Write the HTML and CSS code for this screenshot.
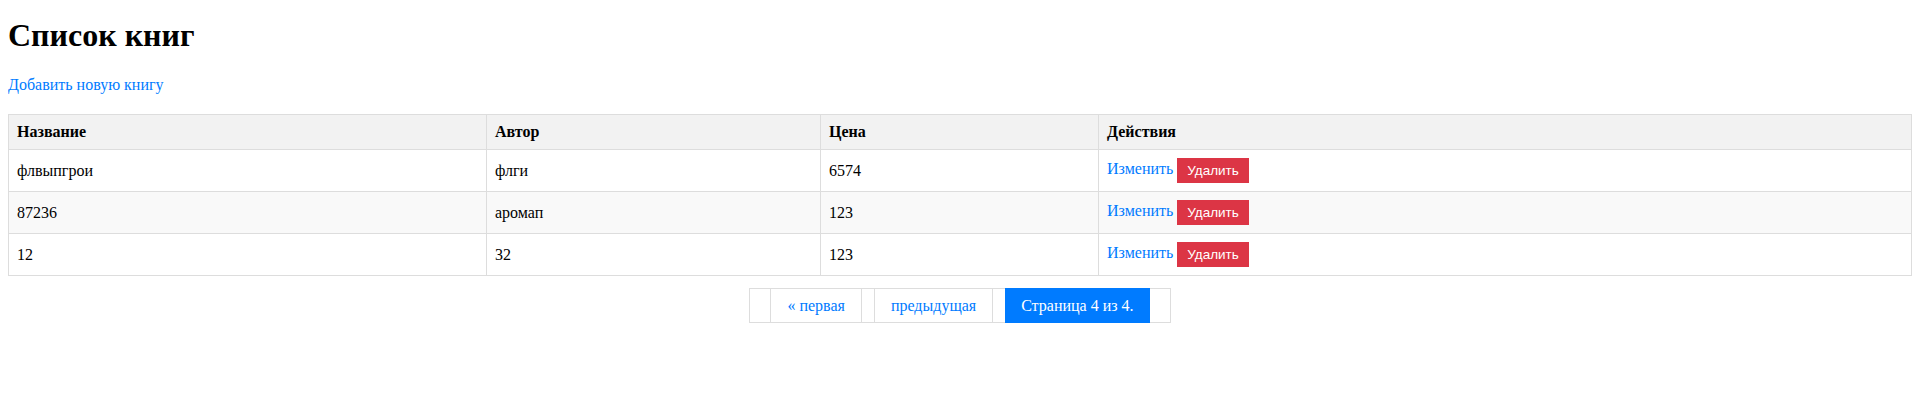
FILE: index.html
```html
<!DOCTYPE html>
<html lang="ru">
<head>
<meta charset="utf-8">
<title>Список книг</title>
<link rel="stylesheet" href="styles.css">
</head>
<body>
<h1 class="title">Список книг</h1>
<div class="add-row"><a class="link" href="#">Добавить новую книгу</a></div>
<table class="books">
  <colgroup>
    <col class="c-name">
    <col class="c-author">
    <col class="c-price">
    <col class="c-actions">
  </colgroup>
  <thead>
    <tr class="head-row">
      <th class="cell head">Название</th>
      <th class="cell head">Автор</th>
      <th class="cell head">Цена</th>
      <th class="cell head">Действия</th>
    </tr>
  </thead>
  <tbody>
    <tr class="row">
      <td class="cell">флвыпгрои</td>
      <td class="cell">флги</td>
      <td class="cell">6574</td>
      <td class="cell"><a class="link" href="#">Изменить</a> <button class="btn-delete" type="button">Удалить</button></td>
    </tr>
    <tr class="row row-alt">
      <td class="cell">87236</td>
      <td class="cell">аромап</td>
      <td class="cell">123</td>
      <td class="cell"><a class="link" href="#">Изменить</a> <button class="btn-delete" type="button">Удалить</button></td>
    </tr>
    <tr class="row">
      <td class="cell">12</td>
      <td class="cell">32</td>
      <td class="cell">123</td>
      <td class="cell"><a class="link" href="#">Изменить</a> <button class="btn-delete" type="button">Удалить</button></td>
    </tr>
  </tbody>
</table>
<div class="pagination">
  <div class="step-links">
    <a class="page-link" href="#">« первая</a>
    <a class="page-link" href="#">предыдущая</a>
    <span class="current">Страница 4 из 4.</span>
  </div>
</div>
</body>
</html>
```

FILE: styles.css
```css
html, body {
  background: #ffffff;
}
body {
  margin: 8px;
  font-family: "Liberation Serif", "Times New Roman", serif;
  font-size: 16px;
  color: #000000;
}
.title {
  font-size: 32px;
  font-weight: bold;
  margin: 9px 0 22px;
  line-height: 37px;
}
.add-row {
  line-height: 18px;
  margin-bottom: 20px;
}
.link {
  color: #007bff;
  text-decoration: none;
}
.books {
  width: 100%;
  border-collapse: collapse;
  table-layout: fixed;
  border: 1px solid #ddd;
}
.c-name { width: 478px; }
.c-author { width: 334px; }
.c-price { width: 278px; }
.cell {
  border: 1px solid #ddd;
  padding: 8px;
  text-align: left;
  line-height: 18px;
}
.head {
  font-weight: bold;
}
.head-row {
  background: #f2f2f2;
}
.row-alt {
  background: #f9f9f9;
}
.btn-delete {
  background: #dc3545;
  color: #ffffff;
  border: none;
  font-family: "Liberation Sans", Arial, sans-serif;
  font-size: 13.5px;
  line-height: 15px;
  padding: 5px 10px;
  margin: 0;
  vertical-align: middle;
  cursor: pointer;
}
.pagination {
  display: flex;
  justify-content: center;
  margin-top: 12px;
}
.step-links {
  display: flex;
  border: 1px solid #ddd;
  padding: 0 20px;
  gap: 12px;
}
.page-link, .current {
  padding: 8px 16px;
  line-height: 17px;
}
.page-link {
  color: #007bff;
  text-decoration: none;
  border-left: 1px solid #ddd;
  border-right: 1px solid #ddd;
}
.current {
  background: #007bff;
  color: #ffffff;
  margin: -1px 0;
  padding: 9px 16px;
}
```
